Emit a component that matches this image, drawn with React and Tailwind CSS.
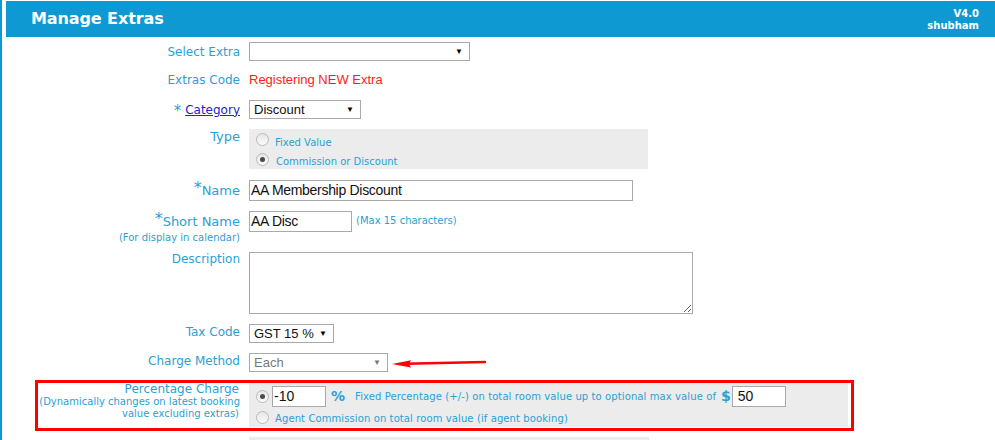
import React from "react";

const LBL = "text-[#2a9fd6]";
const V = { fontFamily: '"DejaVu Sans", Verdana, sans-serif' };
const A = { fontFamily: '"Liberation Sans", Arial, sans-serif' };

function Radio({ checked }) {
  return (
    <span className="relative inline-flex w-[13px] h-[13px] shrink-0 rounded-full border border-[#b9b9b9] bg-gradient-to-b from-[#e6e6e6] to-[#fbfbfb] items-center justify-center">
      {checked && <span className="w-[5px] h-[5px] rounded-full bg-[#4a4a4a]" />}
    </span>
  );
}

function Select({ w, value, disabled }) {
  return (
    <div
      className={`flex items-center justify-between h-[19px] border border-[#a9a9a9] bg-white pl-[4px] pr-[6px] text-[13px] ${disabled ? "text-[#7a7a7a]" : "text-[#111]"}`}
      style={{ ...A, width: w }}
    >
      <span className="leading-none">{value}</span>
      <span className={`text-[8px] leading-none ${disabled ? "text-[#777]" : "text-black"}`}>▼</span>
    </div>
  );
}

function Row({ label, children, className = "", labelClass = "items-center" }) {
  return (
    <div className={`grid grid-cols-[238px_1fr] gap-x-[9px] ${className}`}>
      <div className={`flex justify-end ${labelClass}`}>{label}</div>
      <div className="flex items-center">{children}</div>
    </div>
  );
}

export default function App() {
  return (
    <div className="w-[995px] h-[440px] overflow-hidden bg-white border-l-2 border-[#0e99d4]" style={V}>
      <div className="ml-[4px] mt-px h-[36px] bg-[#0e99d3] flex items-center justify-between pl-[25px] pr-[16px]">
        <span className="text-white font-bold text-[16px] tracking-[-0.1px]">Manage Extras</span>
        <div className="flex flex-col items-end text-white font-bold text-[10px] leading-[12px] mt-[2px]">
          <span>V4.0</span>
          <span>shubham</span>
        </div>
      </div>

      <div className={`text-[12px] ${LBL}`}>
        <Row label={<span>Select Extra</span>} className="mt-[5px] h-[19px]">
          <Select w={221} value="" />
        </Row>

        <Row label={<span>Extras Code</span>} className="mt-[9px] h-[20px]">
          <span className="text-[#ff1a1a] text-[13px]" style={A}>Registering NEW Extra</span>
        </Row>

        <Row
          label={
            <span className="flex items-end">
              <span className="text-[15px] leading-none mr-[4px] -mt-[4px]">*</span>
              <span className="underline text-[#2323c8] text-[12px]">Category</span>
            </span>
          }
          className="mt-[10px] h-[19px]"
        >
          <Select w={112} value="Discount" />
        </Row>

        <Row label={<span className="text-[13px] leading-[15px]">Type</span>} labelClass="items-start" className="mt-[10px] h-[40px]">
          <div className="w-[399px] h-[40px] bg-[#ececec] flex flex-col pl-[7px] pt-[4px] text-[10px]">
            <div className="flex items-start h-[20px]">
              <Radio />
              <span className="ml-[6px] mt-[5px] leading-[10px]">Fixed Value</span>
            </div>
            <div className="flex items-start h-[16px]">
              <Radio checked />
              <span className="ml-[7px] mt-[4px] leading-[10px]">Commission or Discount</span>
            </div>
          </div>
        </Row>

        <Row
          label={
            <span className="flex items-center text-[13px]">
              <span className="text-[16px] leading-none -mt-[6px]">*</span>
              <span>Name</span>
            </span>
          }
          className="mt-[11px] h-[21px]"
        >
          <input
            readOnly
            defaultValue="AA Membership Discount"
            className="w-[384px] h-[21px] border border-[#a9a9a9] px-[1px] text-[14px] text-[#111] outline-none tracking-[-0.3px]"
            style={A}
          />
        </Row>

        <div className="grid grid-cols-[238px_1fr] gap-x-[9px] mt-[10px]">
          <div className="flex flex-col items-end">
            <span className="flex items-center text-[13px] h-[21px]">
              <span className="text-[16px] leading-none -mt-[6px]">*</span>
              <span>Short Name</span>
            </span>
            <span className="text-[10px] leading-[11px]">(For display in calendar)</span>
          </div>
          <div className="flex items-start">
            <input
              readOnly
              defaultValue="AA Disc"
              className="w-[103px] h-[21px] border border-[#a9a9a9] px-[1px] text-[14px] text-[#111] outline-none tracking-[-0.3px]"
              style={A}
            />
            <span className="ml-[4px] mt-[4px] text-[10px] leading-[12px]">(Max 15 characters)</span>
          </div>
        </div>

        <Row label={<span className="leading-[14px]">Description</span>} labelClass="items-start" className="mt-[9px] h-[62px]">
          <textarea readOnly className="w-[444px] h-[62px] border border-[#a9a9a9] outline-none resize" />
        </Row>

        <Row label={<span className="-mt-[3px]">Tax Code</span>} className="mt-[10px] h-[19px]">
          <Select w={85} value="GST 15 %" />
        </Row>

        <Row label={<span className="-mt-[3px]">Charge Method</span>} className="mt-[10px] h-[19px]">
          <Select w={139} value="Each" disabled />
          <svg width="96" height="10" viewBox="0 0 96 10" className="ml-[3px]">
            <path d="M14 5.8 L94 4" stroke="#ff0000" strokeWidth="2.4" strokeLinecap="round" />
            <path d="M1 6 L20 2.2 L18 6 L20 9.4 Z" fill="#ff0000" />
          </svg>
        </Row>

        <div className="ml-[33px] mt-[8px] w-[819px] h-[51px] border-[3px] border-[#ff0000] flex">
          <div className="w-[201px] flex flex-col items-end text-right">
            <span className="text-[12px] leading-[14px] mt-[-1px]">Percentage Charge</span>
            <span className="text-[10px] leading-[12px] -mr-px">(Dynamically changes on latest booking</span>
            <span className="text-[10px] leading-[12px]">value excluding extras)</span>
          </div>
          <div className="ml-[10px] w-[599px] h-[44px] bg-[#ececec] flex flex-col pl-[7px] text-[10px]">
            <div className="flex items-center h-[25px] pt-[1px]">
              <Radio checked />
              <input
                readOnly
                defaultValue="-10"
                className="ml-[3px] w-[54px] h-[21px] border border-[#a9a9a9] bg-white px-[1px] text-[14px] text-[#111] outline-none"
                style={A}
              />
              <span className="ml-[5px] text-[14px] font-bold text-[#2a9fd6]">%</span>
              <span className="ml-[10px] tracking-[0.1px]">Fixed Percentage (+/-) on total room value up to optional max value of</span>
              <span className="ml-[5px] text-[14px] font-bold">$</span>
              <input
                readOnly
                defaultValue="50"
                className="ml-[1px] w-[54px] h-[21px] border border-[#a9a9a9] bg-white px-[5px] text-[14px] text-[#111] outline-none"
                style={A}
              />
            </div>
            <div className="flex items-center h-[18px]">
              <Radio />
              <span className="ml-[6px] mt-[3px] tracking-[0.1px]">Agent Commission on total room value (if agent booking)</span>
            </div>
          </div>
        </div>

        <Row label={<span className="pt-[2px]">Include in booking total</span>} labelClass="items-start" className="mt-[6px] h-[30px]">
          <div className="w-[400px] h-[30px] bg-[#ececec] self-start" />
        </Row>
      </div>
    </div>
  );
}
